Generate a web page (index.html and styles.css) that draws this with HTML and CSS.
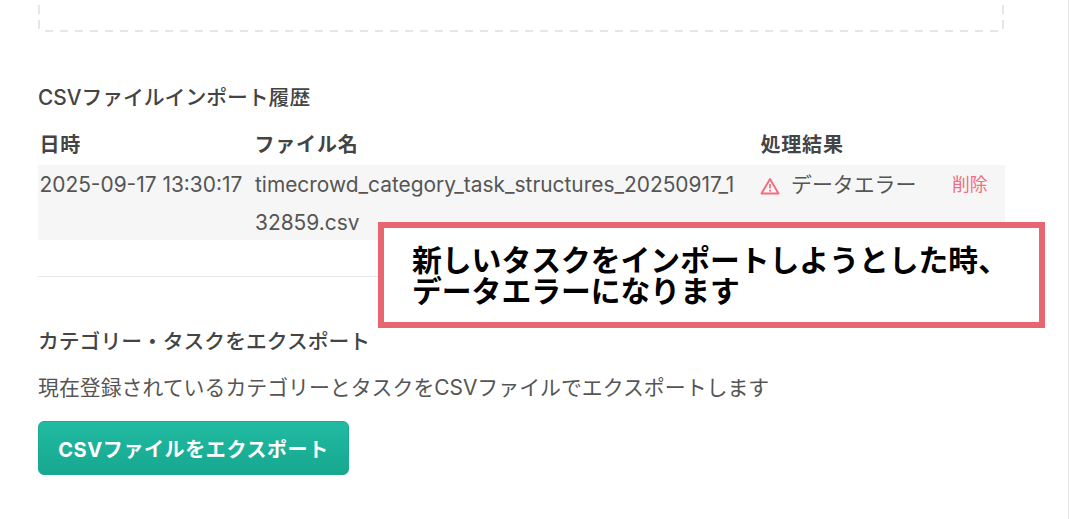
FILE: index.html
```html
<!DOCTYPE html>
<html lang="ja">
<head>
<meta charset="utf-8">
<title>CSVファイルインポート履歴</title>
<link rel="stylesheet" href="styles.css">
</head>
<body>
<main class="page">
  <div class="dropzone"></div>

  <section class="history">
    <h2 class="title">CSVファイルインポート履歴</h2>
    <div class="table">
      <div class="cell head">日時</div>
      <div class="cell head">ファイル名</div>
      <div class="cell head">処理結果</div>
      <div class="cell head"></div>
      <div class="cell body-cell">2025-09-17 13:30:17</div>
      <div class="cell body-cell file">timecrowd_category_task_structures_20250917_132859.csv</div>
      <div class="cell body-cell status">
        <svg class="warn" viewBox="0 0 20 18" width="20" height="18" aria-hidden="true">
          <path d="M10 2 L18.5 16.5 H1.5 Z" fill="none" stroke="#f26d7d" stroke-width="1.9" stroke-linejoin="round"/>
          <path d="M10 7 V11.5" stroke="#f26d7d" stroke-width="1.7"/>
          <circle cx="10" cy="13.8" r="1" fill="#f26d7d"/>
        </svg>
        <span>データエラー</span>
      </div>
      <div class="cell body-cell action">削除</div>
    </div>
  </section>

  <hr class="rule">

  <section class="export">
    <h2 class="title">カテゴリー・タスクをエクスポート</h2>
    <p class="desc">現在登録されているカテゴリーとタスクをCSVファイルでエクスポートします</p>
    <button class="btn" type="button">CSVファイルをエクスポート</button>
  </section>

  <div class="callout">新しいタスクをインポートしようとした時、<br>データエラーになります</div>
</main>
</body>
</html>
```
FILE: styles.css
```css
* { box-sizing: border-box; }
html, body { margin: 0; padding: 0; height: 100%; overflow: hidden; background: #fff; }
body { font-family: Inter, "Noto Sans CJK JP", sans-serif; color: #444; }
.page {
  position: relative;
  width: 1069px;
  height: 519px;
  padding-left: 38px;
  padding-right: 64px;
  border-right: 1px solid #e6e6e6;
}
.dropzone {
  height: 32px;
  background-image:
    repeating-linear-gradient(to right, #e6e6e6 0 8px, transparent 8px 15px),
    repeating-linear-gradient(to bottom, #e6e6e6 0 9px, transparent 9px 15px),
    repeating-linear-gradient(to bottom, #e6e6e6 0 9px, transparent 9px 15px);
  background-repeat: no-repeat;
  background-size: 959px 2px, 2px 27px, 2px 27px;
  background-position: 7px 30px, 0 5px, 100% 5px;
}
.history { padding-top: 52px; }
.title {
  margin: 0;
  font-size: 20.8px;
  line-height: 26px;
  font-weight: 500;
  color: #444;
  padding-top: 1px;
}
.table {
  display: grid;
  grid-template-columns: 215px 506px 192px 54px;
  margin-top: 21px;
}
.cell { font-size: 20.9px; padding: 0 1.5px; }
.head { font-size: 20px; letter-spacing: 0.8px; font-weight: 700; line-height: 26px; height: 33px; }
.body-cell { background: #f6f6f6; line-height: 38px; height: 75px; color: #555; padding-top: 1px; }
.file { word-break: break-all; padding-right: 18px; padding-left: 2px; }
.status { display: flex; align-items: flex-start; gap: 11px; padding-left: 1px; }
.warn { margin-top: 11px; flex: none; }
.action { color: #f26d7d; font-size: 17.8px; padding: 1px 0 0 1px; }
.rule { margin: 36px 0 0; border: none; border-top: 1px solid #e9e9e9; }
.export { padding-top: 51px; }
.desc { margin: 20px 0 0; font-size: 20.9px; line-height: 26px; color: #555; }
.btn {
  display: block;
  margin-top: 20px;
  width: 311px;
  height: 54px;
  padding: 0;
  border: 1px solid #1aa993;
  border-radius: 6px;
  background: linear-gradient(#21bba2, #17a78f);
  color: #fff;
  font: 700 20px Inter, "Noto Sans CJK JP", sans-serif;
  letter-spacing: 0.6px;
}
.callout {
  position: absolute;
  left: 378px;
  top: 222px;
  width: 667px;
  height: 106px;
  padding: 15px 0 0 28px;
  border: 6px solid #e8666f;
  background: #fff;
  color: #000;
  font: 700 29.8px/31px "Noto Sans CJK JP", sans-serif;
}
```
